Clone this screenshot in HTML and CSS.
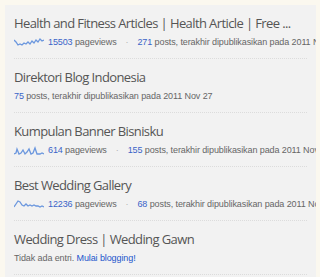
FILE: index.html
```html
<!DOCTYPE html>
<html lang="id">
<head>
    <meta charset="UTF-8">
    <title>Daftar Blog</title>
    <link rel="stylesheet" href="styles.css">
</head>
<body>
    <div class="panel">
        <div class="blog">
            <h3 class="blog-title">Health and Fitness Articles | Health Article | Free ...</h3>
            <div class="blog-meta">
                <svg class="spark" width="30" height="12" viewBox="0 0 30 12"><polyline points="0,4 2,6 4,9 6,8 8,9 10,7 12,8 14,6 16,8 18,5 20,7 22,4 24,6 26,3 28,5 30,4" /></svg>
                <a class="num">15503</a>&nbsp;pageviews
                <span class="dot">·</span>
                <a class="num">271</a>&nbsp;posts, terakhir dipublikasikan pada 2011 Nov 27
            </div>
        </div>
        <div class="blog">
            <h3 class="blog-title">Direktori Blog Indonesia</h3>
            <div class="blog-meta">
                <a class="num">75</a>&nbsp;posts, terakhir dipublikasikan pada 2011 Nov 27
            </div>
        </div>
        <div class="blog">
            <h3 class="blog-title">Kumpulan Banner Bisnisku</h3>
            <div class="blog-meta">
                <svg class="spark" width="30" height="12" viewBox="0 0 30 12"><polyline points="0,10 2,9 3,5 5,10 7,9 9,6 11,10 13,8 15,5 17,10 19,9 21,4 23,10 26,10 28,9 30,10" /></svg>
                <a class="num">614</a>&nbsp;pageviews
                <span class="dot">·</span>
                <a class="num">155</a>&nbsp;posts, terakhir dipublikasikan pada 2011 Nov 26
            </div>
        </div>
        <div class="blog">
            <h3 class="blog-title">Best Wedding Gallery</h3>
            <div class="blog-meta">
                <svg class="spark" width="30" height="12" viewBox="0 0 30 12"><polyline points="0,9 2,6 4,3 6,4 8,7 10,8 12,6 14,8 16,7 18,8 20,7 22,8 24,8 26,9 28,8 30,9" /></svg>
                <a class="num">12236</a>&nbsp;pageviews
                <span class="dot">·</span>
                <a class="num">68</a>&nbsp;posts, terakhir dipublikasikan pada 2011 Nov 27
            </div>
        </div>
        <div class="blog">
            <h3 class="blog-title">Wedding Dress | Wedding Gawn</h3>
            <div class="blog-meta">
                Tidak ada entri.&nbsp;<a class="start">Mulai blogging!</a>
            </div>
        </div>
    </div>
</body>
</html>
```

FILE: styles.css
```css
body {
    margin: 0;
    background: #fbf8ef;
    font-family: "Liberation Sans", Arial, sans-serif;
}

.panel {
    margin: 5px 4px 0 5px;
    padding: 0 9px;
    background: #f2f2f2;
    overflow: hidden;
    height: 272px;
}

.blog {
    padding: 9px 0 10px;
    border-bottom: 1px dotted #dcdcdc;
}

.blog-title {
    margin: 0;
    font-family: "Open Sans", sans-serif;
    font-weight: normal;
    font-size: 13px;
    letter-spacing: -0.6px;
    line-height: 18px;
    color: #555555;
    white-space: nowrap;
}

.blog-meta {
    margin-top: 4px;
    font-size: 9px;
    letter-spacing: -0.1px;
    line-height: 12px;
    color: #666666;
    white-space: nowrap;
    display: flex;
    align-items: center;
}

.spark {
    flex-shrink: 0;
    fill: none;
    stroke: #6b97de;
    stroke-width: 1.3;
    margin-right: 4px;
}

.num {
    color: #3a64c8;
}

.dot {
    color: #b0b0b0;
    margin: 0 9px 0 9px;
}

.start {
    color: #2255cc;
}
```
